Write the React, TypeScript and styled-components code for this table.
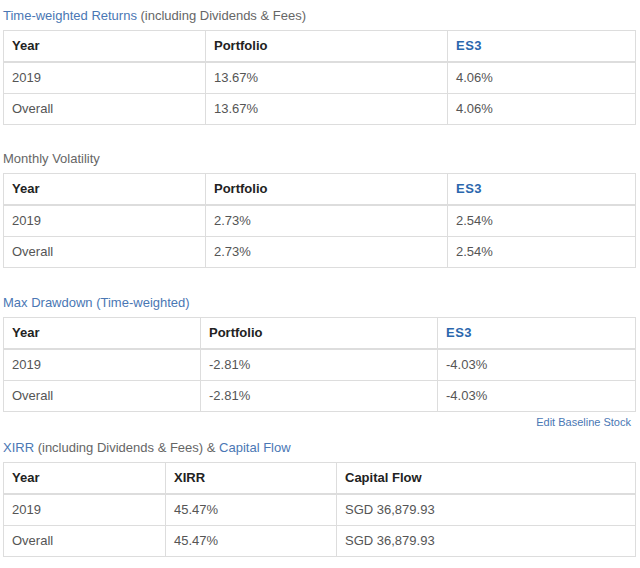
import React from "react";
import styled, { createGlobalStyle } from "styled-components";

const GlobalStyle = createGlobalStyle`
  html, body {
    margin: 0;
    padding: 0;
    background: #fff;
  }
  body {
    font-family: "Liberation Sans", Arial, sans-serif;
    font-size: 13px;
    color: #555;
  }
`;

const Page = styled.div`
  width: 640px;
  padding: 8px 4px 0 3px;
  box-sizing: border-box;
`;

const Section = styled.section<{ $gap?: number }>`
  margin-top: ${(p) => p.$gap ?? 0}px;
`;

const Title = styled.div`
  font-size: 13px;
  line-height: 15px;
  color: #666;
  margin: 0 0 7px 0;
  white-space: nowrap;
`;

const Link = styled.a`
  color: #4a77b4;
  text-decoration: none;
  cursor: pointer;
`;

const Table = styled.table`
  width: 633px;
  border-collapse: collapse;
  table-layout: fixed;
  border: 1px solid #ddd;
`;

const HeadCell = styled.th<{ $accent?: boolean }>`
  text-align: left;
  font-weight: bold;
  font-size: 13px;
  line-height: 16px;
  padding: 7px 8px;
  color: ${(p) => (p.$accent ? "#2a67ad" : "#222")};
  letter-spacing: ${(p) => (p.$accent ? "0.5px" : "0")};
  border: 1px solid #ddd;
  border-bottom: 2px solid #ddd;
`;

const Cell = styled.td`
  font-size: 13px;
  line-height: 16px;
  padding: 7px 8px;
  color: #555;
  border: 1px solid #ddd;
`;

const EditRow = styled.div`
  display: flex;
  justify-content: flex-end;
  padding: 3px 5px 0 0;
  font-size: 11px;
  line-height: 14px;
`;

type Spec = {
  title: React.ReactNode;
  cols: number[];
  head: { label: string; accent?: boolean }[];
  rows: string[][];
};

const sections: Spec[] = [
  {
    title: (
      <>
        <Link>Time-weighted Returns</Link> (including Dividends &amp; Fees)
      </>
    ),
    cols: [202, 242],
    head: [{ label: "Year" }, { label: "Portfolio" }, { label: "ES3", accent: true }],
    rows: [
      ["2019", "13.67%", "4.06%"],
      ["Overall", "13.67%", "4.06%"],
    ],
  },
  {
    title: "Monthly Volatility",
    cols: [202, 242],
    head: [{ label: "Year" }, { label: "Portfolio" }, { label: "ES3", accent: true }],
    rows: [
      ["2019", "2.73%", "2.54%"],
      ["Overall", "2.73%", "2.54%"],
    ],
  },
  {
    title: <Link>Max Drawdown (Time-weighted)</Link>,
    cols: [197, 237],
    head: [{ label: "Year" }, { label: "Portfolio" }, { label: "ES3", accent: true }],
    rows: [
      ["2019", "-2.81%", "-4.03%"],
      ["Overall", "-2.81%", "-4.03%"],
    ],
  },
  {
    title: (
      <>
        <Link>XIRR</Link> (including Dividends &amp; Fees) &amp;{" "}
        <Link>Capital Flow</Link>
      </>
    ),
    cols: [162, 171],
    head: [{ label: "Year" }, { label: "XIRR" }, { label: "Capital Flow" }],
    rows: [
      ["2019", "45.47%", "SGD 36,879.93"],
      ["Overall", "45.47%", "SGD 36,879.93"],
    ],
  },
];

const StatTable = ({ spec }: { spec: Spec }) => (
  <Table>
    <colgroup>
      <col style={{ width: spec.cols[0] }} />
      <col style={{ width: spec.cols[1] }} />
      <col />
    </colgroup>
    <thead>
      <tr>
        {spec.head.map((h) => (
          <HeadCell key={h.label} $accent={h.accent}>
            {h.label}
          </HeadCell>
        ))}
      </tr>
    </thead>
    <tbody>
      {spec.rows.map((r) => (
        <tr key={r[0]}>
          {r.map((c, i) => (
            <Cell key={i}>{c}</Cell>
          ))}
        </tr>
      ))}
    </tbody>
  </Table>
);

export default function App() {
  return (
    <>
      <GlobalStyle />
      <Page>
        <Section>
          <Title>{sections[0].title}</Title>
          <StatTable spec={sections[0]} />
        </Section>
        <Section $gap={26}>
          <Title>{sections[1].title}</Title>
          <StatTable spec={sections[1]} />
        </Section>
        <Section $gap={27}>
          <Title>{sections[2].title}</Title>
          <StatTable spec={sections[2]} />
          <EditRow>
            <Link>Edit Baseline Stock</Link>
          </EditRow>
        </Section>
        <Section $gap={11}>
          <Title>{sections[3].title}</Title>
          <StatTable spec={sections[3]} />
        </Section>
      </Page>
    </>
  );
}
